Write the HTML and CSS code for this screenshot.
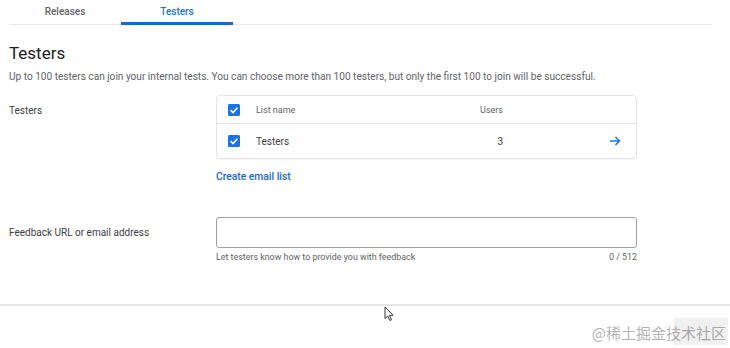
FILE: index.html
```html
<!DOCTYPE html>
<html>
<head>
<meta charset="utf-8">
<link rel="stylesheet" href="styles.css">
</head>
<body>
<div class="page">
  <div class="main">
    <nav class="tabs">
      <div class="tab">Releases</div>
      <div class="tab active">Testers</div>
    </nav>
    <h1 class="title">Testers</h1>
    <p class="desc">Up to 100 testers can join your internal tests. You can choose more than 100 testers, but only the first 100 to join will be successful.</p>

    <div class="form-row testers-row">
      <div class="label">Testers</div>
      <div class="field">
        <div class="card">
          <div class="trow thead">
            <span class="cb"><svg viewBox="0 0 12 12" width="12" height="12"><rect width="12" height="12" rx="1.5" fill="#1a73e8"/><path d="M2.6 6.2 L5 8.5 L9.4 3.8" fill="none" stroke="#fff" stroke-width="1.6"/></svg></span>
            <span></span>
            <span class="c-name">List name</span>
            <span class="c-users">Users</span>
            <span></span>
            <span></span>
          </div>
          <div class="trow tbody">
            <span class="cb"><svg viewBox="0 0 12 12" width="12" height="12"><rect width="12" height="12" rx="1.5" fill="#1a73e8"/><path d="M2.6 6.2 L5 8.5 L9.4 3.8" fill="none" stroke="#fff" stroke-width="1.6"/></svg></span>
            <span></span>
            <span class="c-name">Testers</span>
            <span class="c-users">3</span>
            <span></span>
            <span class="arrow"><svg viewBox="0 0 12 12" width="12" height="12"><path d="M1 6 H10.5 M6.5 2 L10.5 6 L6.5 10" fill="none" stroke="#1a73e8" stroke-width="1.5"/></svg></span>
          </div>
        </div>
        <a class="link">Create email list</a>
      </div>
    </div>

    <div class="form-row feedback-row">
      <div class="label">Feedback URL or email address</div>
      <div class="field">
        <div class="input"></div>
        <div class="helper"><span>Let testers know how to provide you with feedback</span><span>0 / 512</span></div>
      </div>
    </div>
  </div>
  <div class="footer"></div>
  <svg class="cursor" viewBox="0 0 10 16" width="10" height="16"><path d="M1 1 L1 12.5 L3.8 10 L5.8 14.5 L7.5 13.7 L5.6 9.4 L9 9.2 Z" fill="#fff" stroke="#333" stroke-width="1"/></svg>
  <div class="watermark"><span class="wm-bg"></span>@稀土掘金技术社区</div>
</div>
</body>
</html>
```

FILE: styles.css
```css
* { box-sizing: border-box; }
html, body { margin: 0; padding: 0; background: #fff; }
body { font-family: Roboto, "Noto Sans", Arial, sans-serif; color: #202124; width: 730px; height: 348px; overflow: hidden; }
.page { position: relative; width: 730px; height: 348px; }
.main { margin: 0 18px 0 9px; }
.tabs { display: flex; border-bottom: 1px solid #e8eaed; height: 25px; }
.tab { width: 112px; text-align: center; font-size: 10px; font-weight: 500; color: #5f6368; line-height: 23px; }
.tab.active { color: #1a73e8; border-bottom: 3px solid #1967d2; margin-bottom: -1px; }
.title { margin: 17px 0 0 0; font-size: 17px; font-weight: 400; line-height: 22px; color: #202124; }
.desc { margin: 6px 0 0 0; font-size: 10.1px; line-height: 14px; color: #5f6368; }
.form-row { display: flex; }
.label { width: 207px; font-size: 10px; color: #3c4043; line-height: 14px; }
.field { width: 421px; }
.testers-row { margin-top: 11px; }
.testers-row .label { padding-top: 9px; }
.card { border: 1px solid #e3e5e8; border-radius: 4px; box-shadow: 0 1px 1px rgba(0,0,0,0.04); }
.trow { display: grid; grid-template-columns: 12px 16px 184px 63px 1fr 12px; align-items: center; padding: 0 15px 0 11px; }
.thead { height: 28px; border-bottom: 1px solid #e3e5e8; font-size: 9px; color: #5f6368; }
.tbody { height: 34px; font-size: 10px; color: #3c4043; }
.cb { display: flex; }
.c-users { text-align: right; }
.arrow { display: flex; }
.link { display: block; margin-top: 11px; font-size: 10.3px; font-weight: 500; color: #1967d2; line-height: 14px; }
.feedback-row { margin-top: 33px; }
.feedback-row .label { padding-top: 9px; }
.input { height: 31px; border: 1px solid #9aa0a6; border-radius: 3px; }
.helper { display: flex; justify-content: space-between; font-size: 8.9px; color: #5f6368; line-height: 12px; margin-top: 3px; }
.footer { margin-top: 41px; border-top: 2px solid #e6e6e6; height: 40px; }
.cursor { position: absolute; left: 384px; top: 306px; }
.watermark { position: absolute; right: 4px; top: 324px; font-family: "Noto Sans CJK SC", sans-serif; font-size: 15px; line-height: 18px; color: #b4b4b4; }
.wm-bg { position: absolute; left: 82px; right: -2px; top: -6px; bottom: -3px; background: rgba(0,0,0,0.06); }
```
